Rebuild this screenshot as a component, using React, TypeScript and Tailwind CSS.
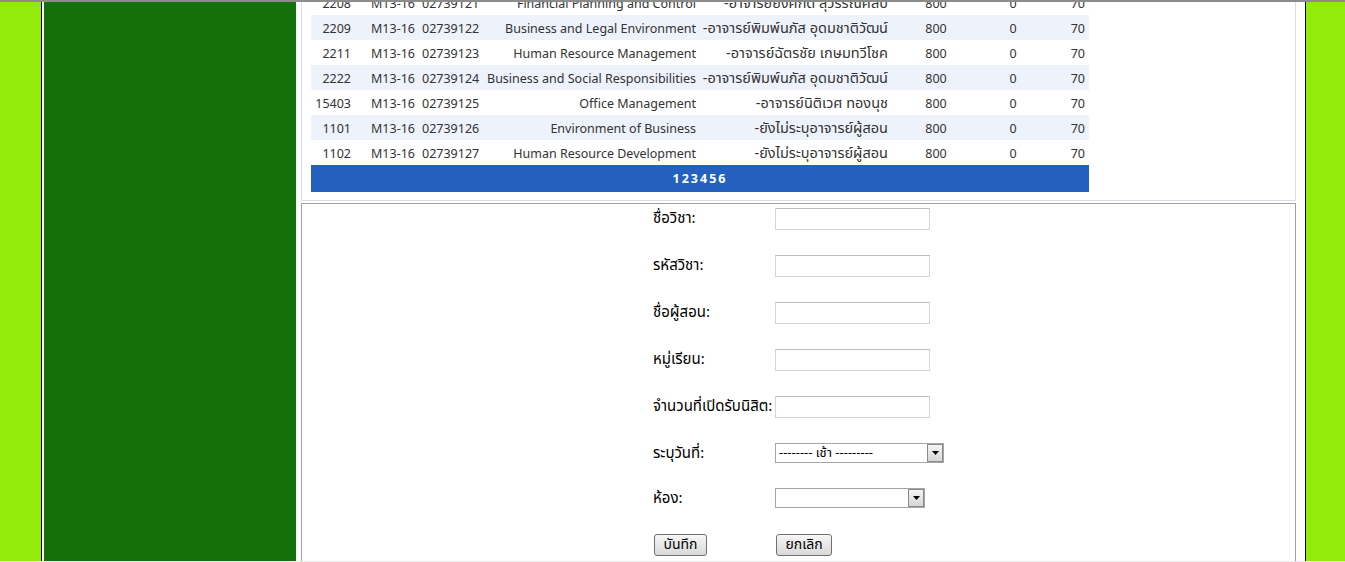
import React from 'react';

type Course = {
  id: string;
  group: string;
  code: string;
  name: string;
  teacher: string;
  seats: string;
  taken: string;
  limit: string;
};

const courses: Course[] = [
  { id: '2208', group: 'M13-16', code: '02739121', name: 'Financial Planning and Control', teacher: '-อาจารย์ยิ่งศักดิ์ สุวรรณศิลป์', seats: '800', taken: '0', limit: '70' },
  { id: '2209', group: 'M13-16', code: '02739122', name: 'Business and Legal Environment', teacher: '-อาจารย์พิมพ์นภัส อุดมชาติวัฒน์', seats: '800', taken: '0', limit: '70' },
  { id: '2211', group: 'M13-16', code: '02739123', name: 'Human Resource Management', teacher: '-อาจารย์ฉัตรชัย เกษมทวีโชค', seats: '800', taken: '0', limit: '70' },
  { id: '2222', group: 'M13-16', code: '02739124', name: 'Business and Social Responsibilities', teacher: '-อาจารย์พิมพ์นภัส อุดมชาติวัฒน์', seats: '800', taken: '0', limit: '70' },
  { id: '15403', group: 'M13-16', code: '02739125', name: 'Office Management', teacher: '-อาจารย์นิติเวศ ทองนุช', seats: '800', taken: '0', limit: '70' },
  { id: '1101', group: 'M13-16', code: '02739126', name: 'Environment of Business', teacher: '-ยังไม่ระบุอาจารย์ผู้สอน', seats: '800', taken: '0', limit: '70' },
  { id: '1102', group: 'M13-16', code: '02739127', name: 'Human Resource Development', teacher: '-ยังไม่ระบุอาจารย์ผู้สอน', seats: '800', taken: '0', limit: '70' },
];

const font = 'font-["Tahoma","Noto_Sans_Thai","Noto_Sans","DejaVu_Sans",sans-serif]';

function TextField() {
  return <input type="text" className="w-[155px] h-[22px] border border-[#d4d4d4] border-t-[#bdbdbd] bg-white outline-none" />;
}

function SelectBox({ width, value }: { width: string; value: string }) {
  return (
    <div className={`relative ${width} h-[20px] border border-[#a5a5a5] bg-white flex items-center`}>
      <span className="pl-[3px] text-[13px] leading-none text-black whitespace-nowrap">{value}</span>
      {/* dropdown arrow button */}
      <div className="absolute right-0 top-0 w-[16px] h-[18px] border border-[#8a8a8a] bg-gradient-to-b from-[#f4f4f4] to-[#d6d6d6] flex items-center justify-center">
        <svg width="7" height="4" viewBox="0 0 7 4">
          <path d="M0 0h7L3.5 4z" fill="#000" />
        </svg>
      </div>
    </div>
  );
}

function FormButton({ label, width }: { label: string; width: string }) {
  return (
    <button className={`${width} h-[22px] rounded-[3px] border border-[#707070] bg-gradient-to-b from-[#f6f6f6] to-[#d9d9d9] text-[14px] text-black leading-none`}>
      {label}
    </button>
  );
}

export default function App() {
  const rows: { label: string; field: React.ReactNode; h: string }[] = [
    { label: 'ชื่อวิชา:', field: <TextField />, h: 'h-[47px]' },
    { label: 'รหัสวิชา:', field: <TextField />, h: 'h-[47px]' },
    { label: 'ชื่อผู้สอน:', field: <TextField />, h: 'h-[47px]' },
    { label: 'หมู่เรียน:', field: <TextField />, h: 'h-[47px]' },
    { label: 'จำนวนที่เปิดรับนิสิต:', field: <TextField />, h: 'h-[47px]' },
    { label: 'ระบุวันที่:', field: <SelectBox width="w-[169px]" value="-------- เช้า ---------" />, h: 'h-[45px]' },
    { label: 'ห้อง:', field: <SelectBox width="w-[150px]" value="" />, h: 'h-[46px]' },
  ];

  return (
    <div className={`relative h-[562px] overflow-hidden bg-[#92eb08] ${font}`}>
      <div className="ml-[41px] w-[1265px] h-[700px] bg-white border-x border-black flex">
        {/* Sidebar */}
        <div className="ml-[2px] w-[252px] bg-[#13700b]" />

        {/* Content column */}
        <div className="ml-[5px] w-[995px] flex flex-col">
          {/* Course table */}
          <div className="-mt-[11px] border border-[#d5dde6] pl-[9px] pb-[8px]">
            <div className="w-[778px] text-[12.5px] text-[#333]">
              {courses.map((c, i) => (
                <div key={c.id} className={`flex h-[25px] pt-[5px] items-center whitespace-nowrap ${i % 2 === 1 ? 'bg-[#eef2fb]' : 'bg-white'}`}>
                  <div className="w-[40px] text-right">{c.id}</div>
                  <div className="w-[63px] ml-[1px] pl-[19px] text-left">{c.group}</div>
                  <div className="w-[72px] pl-[7px]">{c.code}</div>
                  <div className="w-[209px] text-right">{c.name}</div>
                  <div className="w-[192px] text-right text-[14.5px]">{c.teacher}</div>
                  <div className="w-[94px] text-center pl-[2px]">{c.seats}</div>
                  <div className="w-[62px] text-center">{c.taken}</div>
                  <div className="flex-1 text-right pr-[4px]">{c.limit}</div>
                </div>
              ))}
              <div className="h-[27px] pt-[4px] bg-[#2461bf] flex items-center justify-center text-white font-bold tracking-[2px] text-[12.5px]">
                123456
              </div>
            </div>
          </div>

          {/* Course form */}
          <div className="flex-1 mt-[2px] border border-[#a0a0a0] pt-[4px] flex justify-center">
            <div className="w-[291px] text-[15px] text-black">
              {rows.map((r) => (
                <div key={r.label} className={`flex ${r.h}`}>
                  <div className="w-[122px] whitespace-nowrap leading-[22px]">{r.label}</div>
                  <div>{r.field}</div>
                </div>
              ))}
              <div className="flex">
                <div className="w-[122px] pl-[1px]">
                  <FormButton label="บันทึก" width="w-[53px]" />
                </div>
                <div className="pl-[1px]">
                  <FormButton label="ยกเลิก" width="w-[56px]" />
                </div>
              </div>
            </div>
          </div>
        </div>
      </div>

      {/* viewport edges */}
      <div className="absolute top-0 left-0 right-0 h-[2px] bg-[#8c8c8c]" />
      <div className="absolute bottom-0 left-0 right-0 h-[1px] bg-[#ebebeb]" />
    </div>
  );
}
